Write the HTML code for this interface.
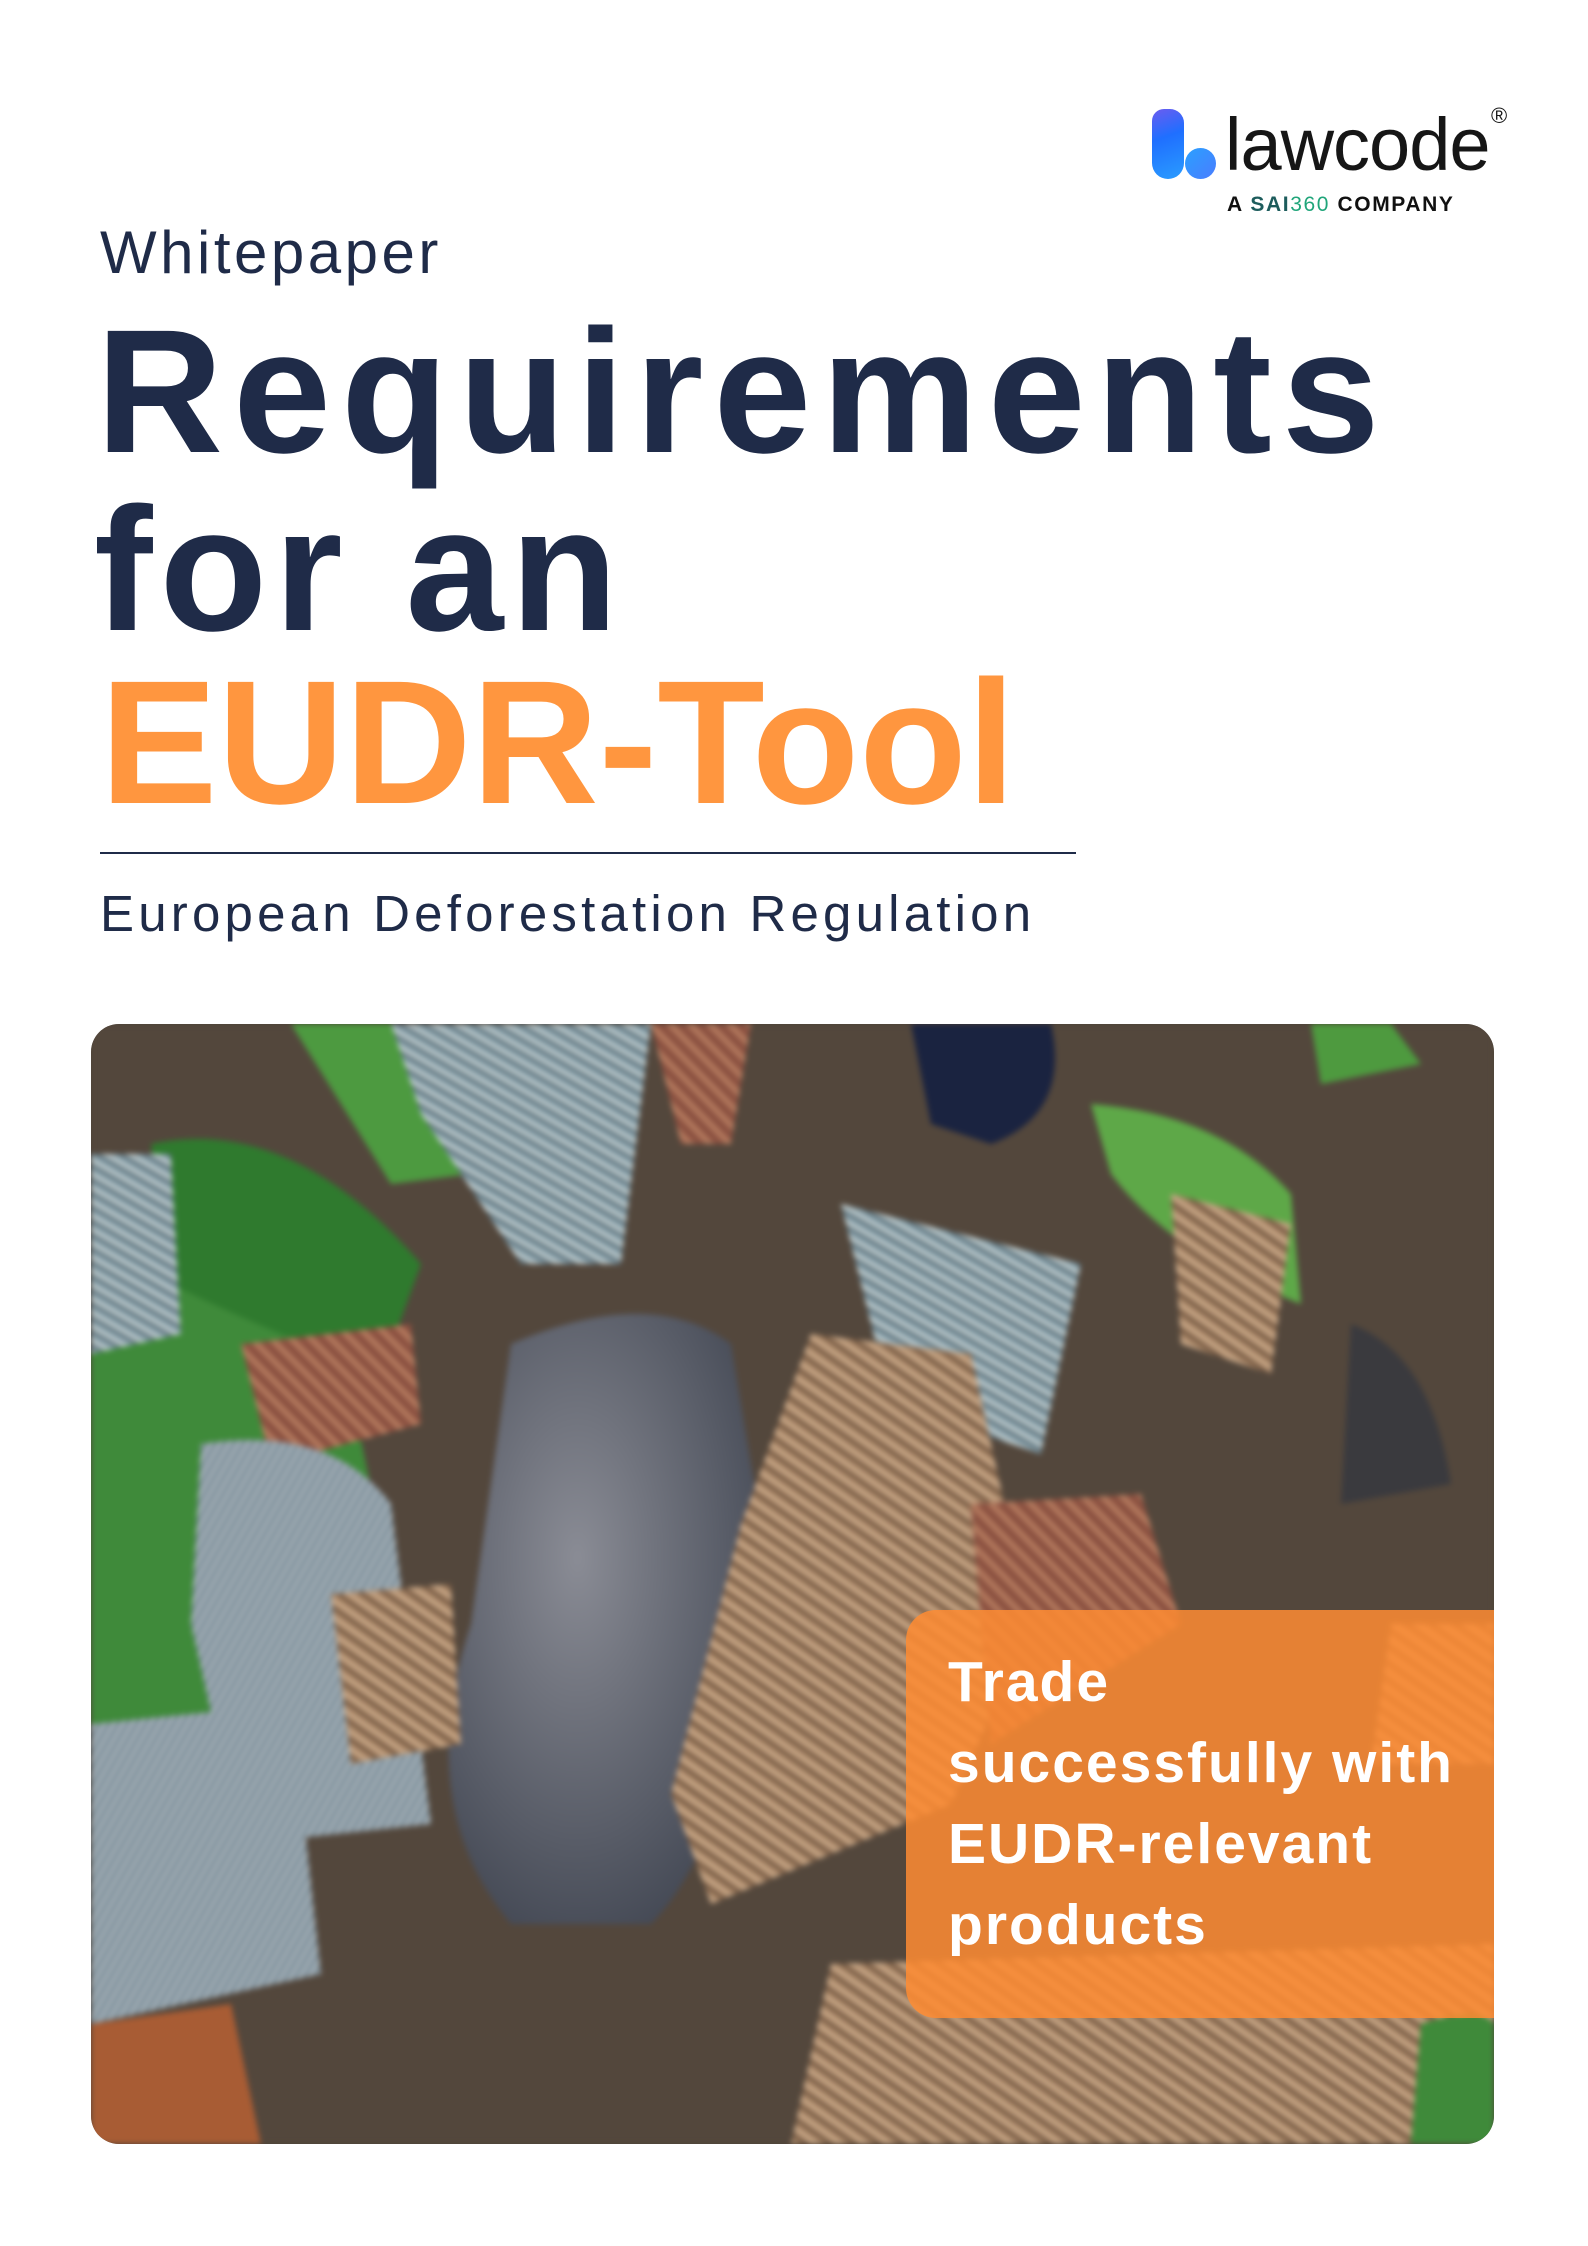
<!DOCTYPE html>
<html><head><meta charset="utf-8"><style>
*{margin:0;padding:0;box-sizing:border-box}
body{width:1588px;height:2246px;background:#fff;position:relative;overflow:hidden;font-family:"Liberation Sans",sans-serif}
.a{position:absolute;white-space:nowrap}
</style></head><body>
<div class="a" style="left:1152px;top:109px;width:32px;height:70px;border-radius:12px 14px 16px 16px;background:linear-gradient(160deg,#6a5cf0,#1f6fff 40%,#2a9cff)"></div>
<div class="a" style="left:1185px;top:148px;width:31px;height:31px;border-radius:50%;background:linear-gradient(135deg,#2aa0ff,#4a7dff)"></div>
<div class="a" style="left:1225px;top:100px;font-size:74px;line-height:90px;color:#161616;letter-spacing:-1px">lawcode</div>
<div class="a" style="left:1491px;top:103px;font-size:22px;color:#161616">®</div>
<div class="a" style="left:1227px;top:193px;font-size:21px;font-weight:bold;color:#111;letter-spacing:1.6px">A <span style="color:#1d5c5c">SAI</span><span style="color:#20a57a;font-weight:normal">360</span> COMPANY</div>

<div class="a" style="left:100px;top:220px;font-size:60px;line-height:66px;color:#1f2b48;letter-spacing:3.5px">Whitepaper</div>
<div class="a" style="left:96px;top:312px;font-size:176px;line-height:160px;font-weight:bold;color:#1f2b48;letter-spacing:10px">Requirements</div>
<div class="a" style="left:94px;top:490px;font-size:176px;line-height:160px;font-weight:bold;color:#1f2b48;letter-spacing:7px">for an</div>
<div class="a" style="left:100px;top:663px;font-size:176px;line-height:160px;font-weight:bold;color:#ff963f">EUDR-Tool</div>
<div class="a" style="left:100px;top:852px;width:976px;height:2px;background:#1f2b48"></div>
<div class="a" style="left:100px;top:886px;font-size:51px;line-height:56px;color:#1f2b48;letter-spacing:4.2px">European Deforestation Regulation</div>

<div class="a" style="left:91px;top:1024px;width:1403px;height:1120px;border-radius:28px;overflow:hidden;background:#4e4338">
<svg width="1403" height="1120" style="position:absolute;left:0;top:0;filter:blur(3px)">
<defs>
<pattern id="lg" width="14" height="14" patternUnits="userSpaceOnUse" patternTransform="rotate(-55)"><rect width="14" height="14" fill="#9c7a5c"/><rect width="6" height="14" fill="#c4a383"/><rect x="10" width="2" height="14" fill="#5a4434"/></pattern>
<pattern id="lb" width="12" height="12" patternUnits="userSpaceOnUse" patternTransform="rotate(-60)"><rect width="12" height="12" fill="#7f9aa6"/><rect width="5" height="12" fill="#b9c6c8"/><rect x="9" width="2" height="12" fill="#4d5a60"/></pattern>
<pattern id="lr" width="14" height="14" patternUnits="userSpaceOnUse" patternTransform="rotate(-45)"><rect width="14" height="14" fill="#8a5040"/><rect width="6" height="14" fill="#b47a5e"/></pattern>
<pattern id="lg2" width="8" height="8" patternUnits="userSpaceOnUse" patternTransform="rotate(30)"><rect width="8" height="8" fill="#7c8d98"/><rect width="3" height="8" fill="#b3bec4"/></pattern>
<radialGradient id="wt" cx="0.4" cy="0.4" r="0.7"><stop offset="0" stop-color="#8a8c95"/><stop offset="1" stop-color="#3f4450"/></radialGradient>
</defs>
<rect width="1403" height="1120" fill="#53473c"/>
<path d="M0 280 Q120 200 250 320 L300 560 L160 780 L0 760Z" fill="#3f8a3a"/>
<path d="M60 120 Q200 90 330 240 L290 350 Q160 300 80 260Z" fill="#2f7a2e"/>
<path d="M200 0 L330 0 L380 150 L300 160Z" fill="#4d9a40"/>
<path d="M1000 80 Q1130 90 1200 170 L1210 280 Q1080 230 1020 150Z" fill="#5ea848"/>
<path d="M1220 0 L1300 0 L1330 40 L1230 60Z" fill="#4e9a3f"/>
<path d="M420 320 Q560 260 640 320 L680 560 Q640 820 560 900 L420 900 Q320 780 380 600Z" fill="url(#wt)"/>
<path d="M820 0 L960 0 Q980 90 900 120 L840 100Z" fill="#1a2340"/>
<path d="M300 0 L560 0 L530 240 L430 240 L330 90Z" fill="url(#lb)"/>
<path d="M560 0 L660 0 L640 120 L590 120Z" fill="url(#lr)"/>
<path d="M0 130 L80 130 L90 310 L0 330Z" fill="url(#lb)"/>
<path d="M150 320 L320 300 L330 400 L180 440Z" fill="url(#lr)"/>
<path d="M110 420 Q240 400 300 480 L340 800 L150 820 L100 600Z" fill="url(#lg2)"/>
<path d="M0 700 L200 680 L230 950 L0 1000Z" fill="url(#lg2)"/>
<path d="M0 1000 L140 980 L170 1120 L0 1120Z" fill="#a85c34"/>
<path d="M240 570 L360 560 L370 720 L260 740Z" fill="url(#lg)"/>
<path d="M750 180 L990 240 L950 430 L800 380Z" fill="url(#lb)"/>
<path d="M1080 170 L1200 200 L1180 350 L1090 320Z" fill="url(#lg)"/>
<path d="M720 310 L880 330 L940 600 L860 780 L620 880 L580 770 L650 500Z" fill="url(#lg)"/>
<path d="M880 480 L1050 470 L1090 600 L900 720Z" fill="url(#lr)"/>
<path d="M1300 600 L1403 600 L1403 740 L1280 740Z" fill="url(#lg)"/>
<path d="M740 940 L1403 920 L1403 1120 L700 1120Z" fill="url(#lg)"/>
<path d="M1260 300 Q1340 330 1360 460 L1250 480Z" fill="#3a3a3e"/>
<path d="M1330 1000 Q1390 980 1403 1000 L1403 1120 L1320 1120Z" fill="#3f8a3a"/>
</svg>
<div class="a" style="left:815px;top:586px;width:590px;height:408px;border-radius:30px 0 0 30px;background:rgba(255,140,50,0.85)"></div>
<div class="a" style="left:857px;top:618px;font-size:57px;line-height:81px;font-weight:bold;color:#fff;letter-spacing:2px">Trade<br>successfully with<br>EUDR-relevant<br>products</div>
</div>
</body></html>
